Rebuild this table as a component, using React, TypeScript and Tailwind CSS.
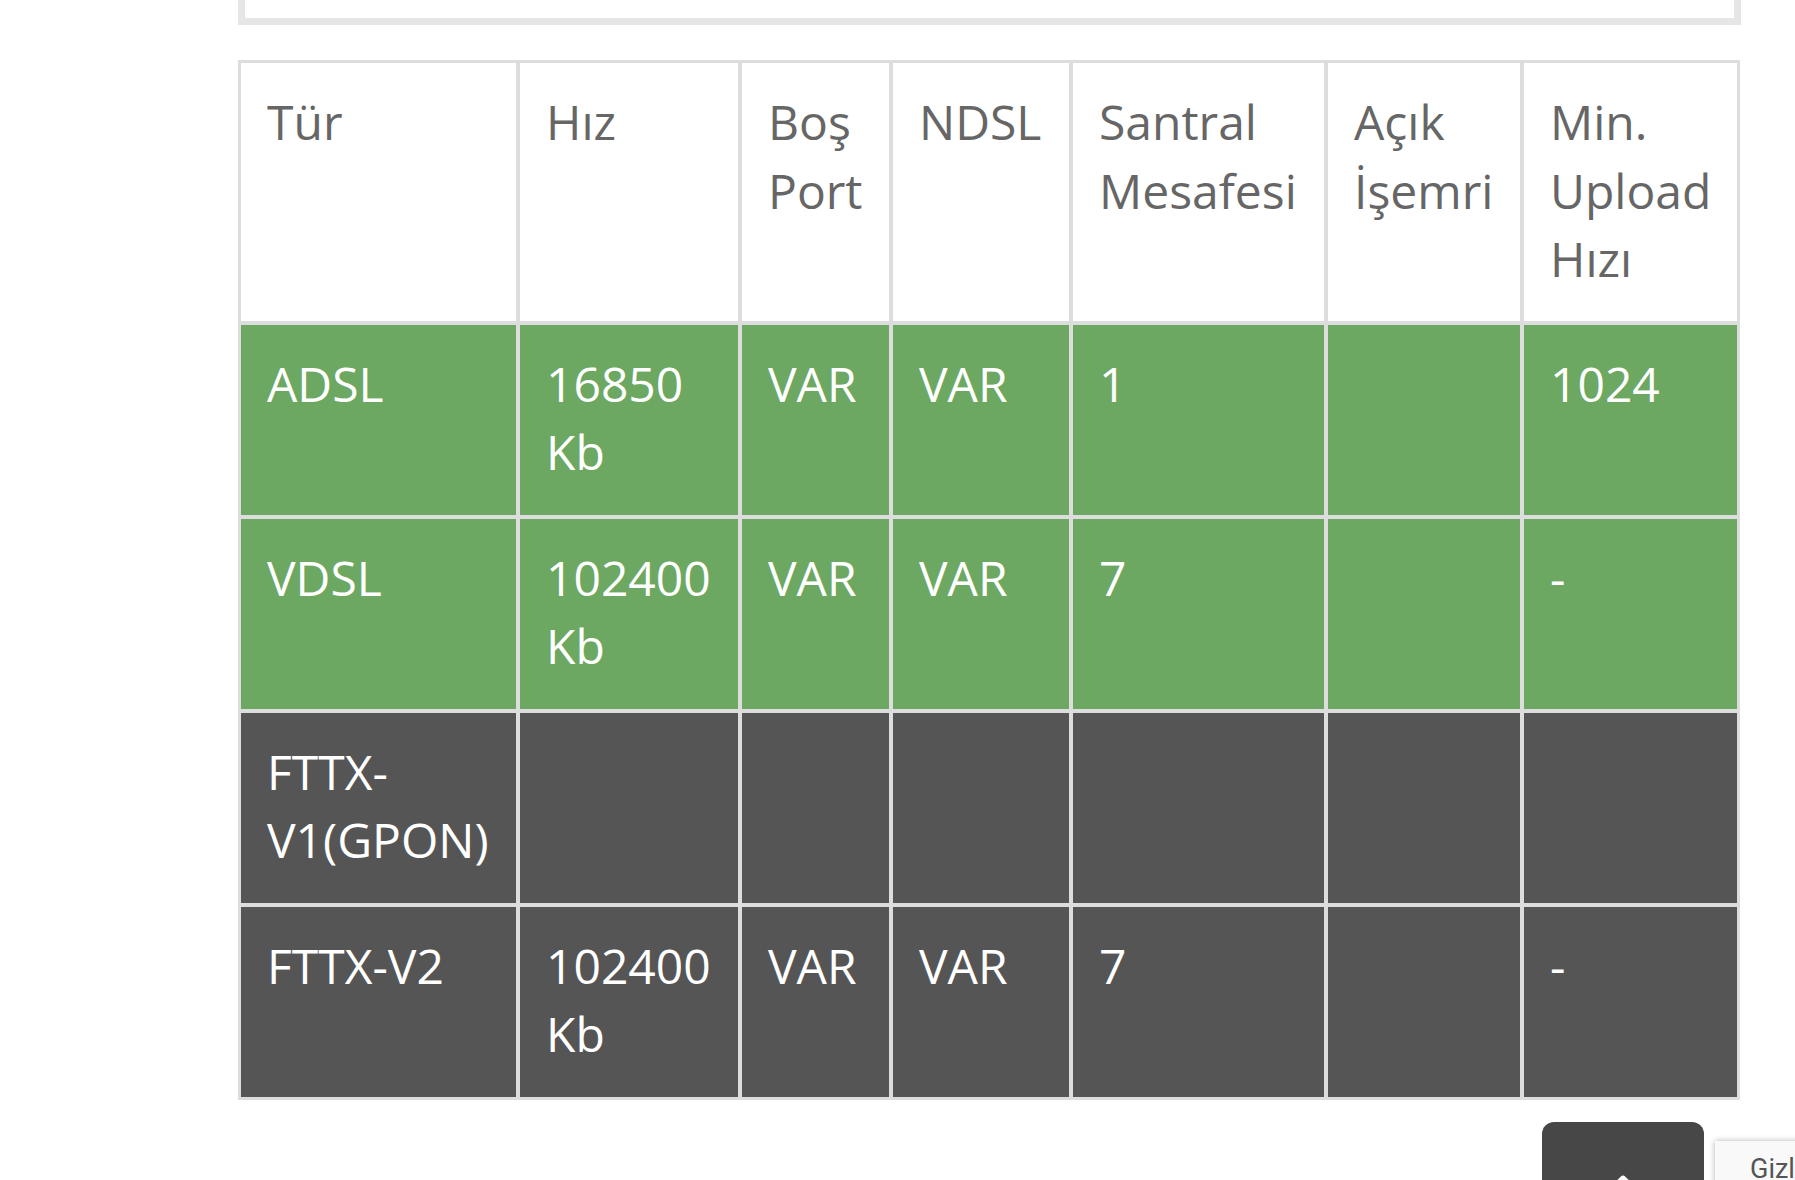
import { ChevronUp } from "lucide-react";

const headers = [
  { label: ["Tür"], w: "w-[279px]" },
  { label: ["Hız"], w: "w-[222px]" },
  { label: ["Boş", "Port"], w: "w-[151px]" },
  { label: ["NDSL"], w: "w-[180px]" },
  { label: ["Santral", "Mesafesi"], w: "w-[255px]" },
  { label: ["Açık", "İşemri"], w: "w-[196px]" },
  { label: ["Min.", "Upload", "Hızı"], w: "w-[217px]" },
];

const rows = [
  { tone: "green", cells: ["ADSL", "16850 Kb", "VAR", "VAR", "1", "", "1024"] },
  { tone: "green", cells: ["VDSL", "102400 Kb", "VAR", "VAR", "7", "", "-"] },
  { tone: "dark", cells: ["FTTX-V1(GPON)", "", "", "", "", "", ""] },
  { tone: "dark", cells: ["FTTX-V2", "102400 Kb", "VAR", "VAR", "7", "", "-"] },
];

export default function App() {
  return (
    <div className="relative w-[1795px] h-[1180px] overflow-hidden bg-white font-['Open_Sans',sans-serif]">
      {/* bottom of the previous box */}
      <div className="ml-[238px] w-[1503px] h-[25px] border-x-[7px] border-b-[7px] border-[#e6e6e6] bg-white" />

      {/* TABLE */}
      <table className="ml-[238px] mt-[35px] w-[1502px] table-fixed border-separate border-spacing-0 border border-[#dddddd] text-[48px] leading-[68.6px]">
        <colgroup>
          {headers.map((h) => (
            <col key={h.label.join(" ")} className={h.w} />
          ))}
        </colgroup>
        <thead>
          <tr>
            {headers.map((h) => (
              <th
                key={h.label.join(" ")}
                className="border-2 border-[#dddddd] bg-white pl-[26px] pr-[20px] pt-[25px] pb-[27px] text-left align-top font-normal text-[#666666]"
              >
                {h.label.map((l, i) => (
                  <div key={i}>{l}</div>
                ))}
              </th>
            ))}
          </tr>
        </thead>
        <tbody>
          {rows.map((row) => (
            <tr
              key={row.cells[0]}
              className={row.tone === "green" ? "bg-[#6ca862]" : "bg-[#555555]"}
            >
              {row.cells.map((c, i) => (
                <td
                  key={i}
                  className="h-[194px] border-2 border-[#dddddd] pl-[26px] pr-[20px] py-[25px] align-top text-white"
                >
                  {c}
                </td>
              ))}
            </tr>
          ))}
        </tbody>
      </table>

      {/* BACK TO TOP + PRIVACY BADGE */}
      <div className="flex items-start ml-[1542px] mt-[22px] w-[500px]">
        <button className="shrink-0 w-[162px] h-[90px] rounded-[12px] bg-[#474747] flex justify-center pt-[42px]">
          <ChevronUp className="w-[40px] h-[40px] text-white" strokeWidth={4} />
        </button>
        <div className="shrink-0 ml-[11px] mt-[19px] w-[300px] h-[64px] bg-[#f9f9f9] shadow-[0_0_6px_rgba(0,0,0,0.3)] pl-[35px] pt-[8px] font-['Roboto',sans-serif] text-[27px] text-[#555555] whitespace-nowrap">
          Gizlilik - Şartlar
        </div>
      </div>
    </div>
  );
}
